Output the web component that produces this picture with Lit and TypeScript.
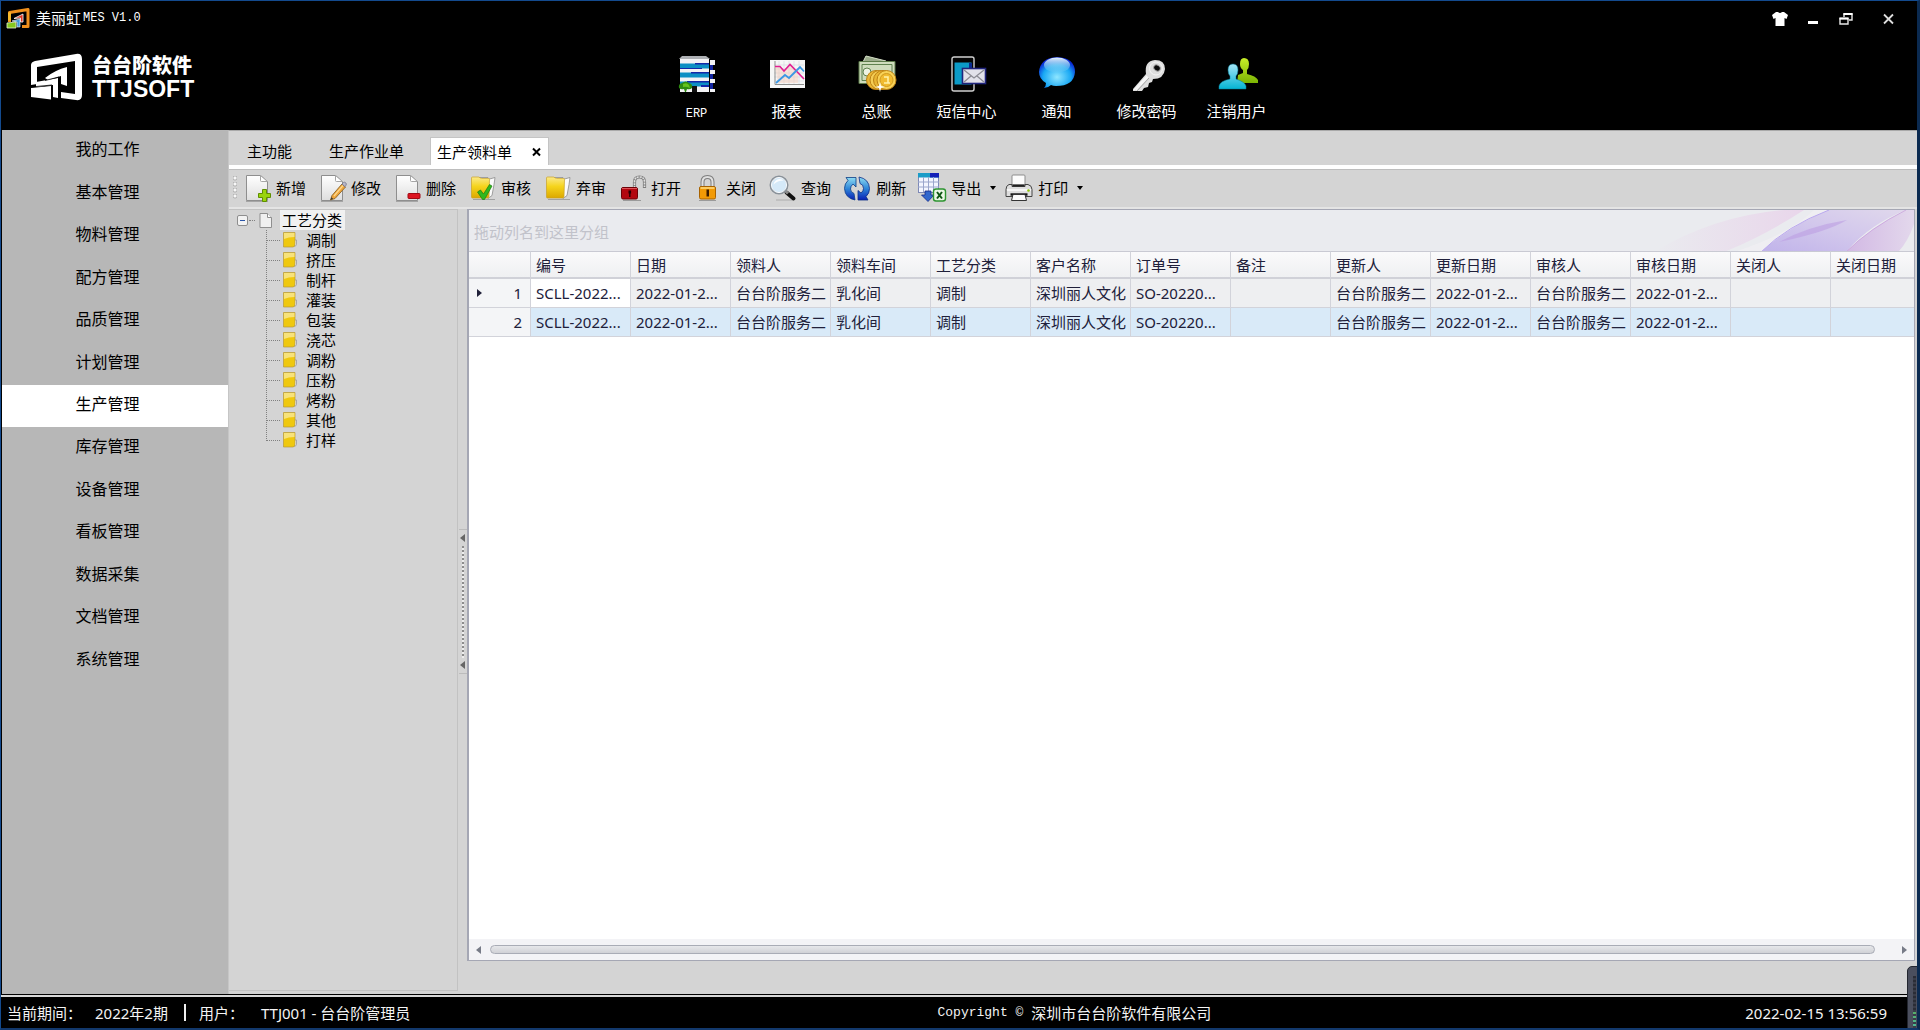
import { LitElement, html, css, svg, TemplateResult } from "lit";
import { customElement, state } from "lit/decorators.js";
import { classMap } from "lit/directives/class-map.js";

type Icon = TemplateResult;

/* ---- shared drawing pieces ---- */
const page = (id: string) => svg`
  <defs><linearGradient id=${id} x1="0" y1="0" x2="0" y2="1"><stop offset="0" stop-color="#fff"/><stop offset="1" stop-color="#dedede"/></linearGradient></defs>
  <path d="M.5 1.500h14l7 6v19h-21z" fill="url(#${id})" stroke="#8e8e8e"/>
  <path d="M14.500 1.500v5q0 1 1 1h6z" fill="#fff" stroke="#a5a5a5"/>
  <path d="M0 27.500h22" stroke="#777" opacity=".5"/>`;

const folder = (id: string) => svg`
  <defs><linearGradient id=${id} x1="0" y1="0" x2="0" y2="1"><stop offset="0" stop-color="#fbe98b"/><stop offset=".45" stop-color="#f5d41c"/><stop offset="1" stop-color="#dca800"/></linearGradient></defs>
  <path d="M7 3.500h10l1.500 1.500 5.500-1.500-1 7-2 11-4 3z" fill="#fafafa" stroke="#8c8c8c" stroke-width=".8"/>
  <path d="M.5 4q0-1 1-1h6l3 1.500h7q1 0 1 1l-.5 17q0 1.500-1.500 1.500h-15q-1 0-1-1z" fill="url(#${id})" stroke="#c9a227" stroke-width=".7"/>
  <path d="M2 25.500h22" stroke="#666" opacity=".45"/>`;

const tool = (body: unknown): Icon =>
  html`<svg class="tool-icon" viewBox="0 0 28 28" aria-hidden="true">${body}</svg>`;

const toolIcons: Record<string, Icon> = {
  add: tool(svg`${page("pa")}<path d="M16.500 15.500h4v4h4v4h-4v4h-4v-4h-4v-4h4z" fill="#9ad40c" stroke="#5f8f00"/>`),
  edit: tool(svg`${page("pe")}
    <path d="M9.500 26l1.500-4.500 10-11.500 3.500 3-10.500 11.500z" fill="#f0a63c" stroke="#8a6325" stroke-width=".9"/>
    <path d="M13 22l9-10.500" stroke="#ffd98c" stroke-width="1.200"/>
    <path d="M21 10l1.500-1.500q1-.8 2.200.3t.3 2.400l-1 1.500z" fill="#b8b8c8" stroke="#74748a" stroke-width=".8"/>
    <path d="M9.500 26l1-2.800 1.600 1.400z" fill="#333"/>`),
  remove: tool(svg`${page("pr")}<rect x="12" y="19.500" width="12" height="5" rx=".8" fill="#dc1420" stroke="#a00812"/>`),
  approve: tool(svg`${folder("fa")}<path d="M6.500 18l3-2 3 4 6-9.500 2.500 1.500-7.500 13.500h-2z" fill="#31b81d" stroke="#1c7d10" stroke-width=".7"/>`),
  revoke: tool(folder("fr")),
  unlock: tool(svg`
    <path d="M13.500 14V8q0-5 5-5t5 5v6" fill="none" stroke="#7e7e7e" stroke-width="3.200"/>
    <path d="M13.500 14V8q0-5 5-5t5 5v5" fill="none" stroke="#e2e2e2" stroke-width="1.600" stroke-dasharray="2 .8"/>
    <rect x=".5" y="13.500" width="16" height="11.500" rx="1.500" fill="#b30710" stroke="#6d0208"/>
    <path d="M1 14.500h15" stroke="#e05058" /><path d="M7.500 16.500h2.600v3h-.6v3.500h-1.400v-3.500h-.6z" fill="#260002"/>
    <path d="M2 26.500h18" stroke="#555" opacity=".45"/>`),
  lock: tool(svg`<g transform="translate(-2 0)">
    <path d="M8.500 14V8q0-5 5-5t5 5v6" fill="none" stroke="#7e7e7e" stroke-width="4"/>
    <path d="M8.500 14V8q0-5 5-5t5 5v6" fill="none" stroke="#e0e0e0" stroke-width="2"/>
    <rect x="5.500" y="12.500" width="16" height="12.500" rx="1.500" fill="#f29a06" stroke="#a86200"/>
    <path d="M6.500 14h14" stroke="#ffd978" stroke-width="1.600"/><path d="M12.500 15.500h2.500v7h-2.500z" fill="#3a1b00"/>
    <path d="M5 26.500h17" stroke="#555" opacity=".45"/></g>`),
  search: tool(svg`<g transform="translate(-3 0)">
    <path d="M18.500 18.500l7 6" stroke="#111" stroke-width="4" stroke-linecap="round"/>
    <path d="M17 16.500l3 3" stroke="#8b8b8b" stroke-width="3"/>
    <circle cx="11" cy="11" r="8.500" fill="#d5e9f8" stroke="#8a929a" stroke-width="2"/>
    <circle cx="11" cy="11" r="7.600" fill="none" stroke="#f4f7fa"/>
    <path d="M5.500 10.500q1-5 6-5.500 3 0 4 1.500-6 0-10 4z" fill="#fff" opacity=".9"/>
    <path d="M8 26h16" stroke="#555" opacity=".3"/></g>`),
  refresh: tool(svg`<g transform="translate(-3 0)">
    <defs><linearGradient id="rf" x1="0" y1="0" x2="0" y2="1"><stop offset="0" stop-color="#8fdcf2"/><stop offset=".5" stop-color="#2f86d8"/><stop offset="1" stop-color="#0a1fb4"/></linearGradient></defs>
    <path d="M12 26q-10-2-10.500-11.500 0-5 3.500-8l-2-3h10v9.500l-3-3q-2.500 2-2.500 5 0 3 3.500 4.500z" fill="url(#rf)" stroke="#0b3c86" stroke-width=".8"/>
    <path d="M16 3q10 2 10.500 11.500 0 5-3.500 8l2 3.500h-10v-9.500l3 2.500q2.500-2 2.500-4.500 0-4-3.500-5z" fill="url(#rf)" stroke="#0b2c86" stroke-width=".8"/></g>`),
  export: tool(svg`<g transform="translate(-3 0)">
    <rect x=".5" y="-.5" width="20" height="19" fill="#f3f6ff" stroke="#7d88b5"/>
    <path d="M0 -1h21v4.500h-21z" fill="#1a9cc8"/><path d="M12 -1h9v4.500h-9z" fill="#1420b8"/>
    <path d="M0 8h21M0 13h21M5.500 3v15M10.500 3v15M15.500 3v15" stroke="#9aa6cc" />
    <path d="M7 17h6v4h3l-6 6.500-6.500-6.500h3.500z" fill="#3167cd" stroke="#142a86" stroke-width=".8"/>
    <rect x="15.500" y="15" width="12" height="12" rx="2.500" fill="#e9f6e4" stroke="#2d9430" stroke-width="1.400"/>
    <path d="M19 18l5 6.500M24 18l-5 6.500" stroke="#0e5514" stroke-width="2"/></g>`),
  print: tool(svg`<g transform="translate(-3 0)">
    <path d="M7 11V2q0-1 1-1h11q1 0 1 1v9z" fill="#fcfcfc" stroke="#8d8d8d"/>
    <path d="M4 10.500h3v2h13v-2h3q4 1 4 5v7h-26v-7q0-4 3-5z" fill="#dedede" stroke="#444"/>
    <path d="M7.500 11.500h12" stroke="#222" stroke-width="2"/><path d="M2 16h24" stroke="#fff" stroke-width="1.400"/>
    <path d="M5.500 20.500h17" stroke="#111" stroke-width="2.400"/>
    <path d="M8 20.500h12l1.500 6h-15z" fill="#fafafa" stroke="#333"/><circle cx="23.500" cy="16.500" r="1.300" fill="#8fc40a"/></g>`),
};

const nav = (body: unknown): Icon =>
  html`<svg class="nav-icon" viewBox="0 0 36 36" aria-hidden="true">${body}</svg>`;

const navItems: { label: string; icon: Icon }[] = [
  {
    label: "ERP",
    icon: nav(svg`
      <path d="M3 0h24l4 3h-31z" fill="#aeb0b4"/>
      <path d="M1 3h29v33h-29z" fill="#f3f3f5"/>
      <path d="M1 7.500h29v5h-29zM1 16.500h29v5h-29zM1 25.500h29v5h-29z" fill="#0c8fc4"/>
      <path d="M16 7h14v1.500h-14zM1 12h22v1h-22zM12 16h18v1.500h-18zM8 25h22v1.500h-22zM22 29h8v2h-8z" fill="#1428a8"/>
      <path d="M31 4h5v32h-5z" fill="#f2f2f5"/>
      <path d="M31 9h3v5h-3zM31 18h3v5h-3zM31 27h3v6h-3z" fill="#1224a0"/><path d="M34 9h2v5h-2zM34 18h2v5h-2zM34 27h2v6h-2z" fill="#000"/>
      <path d="M13 30h5v6h-5z" fill="#111"/>
      <path d="M0 32q-1-4 3-5 4-3 7 0 4 1 3 5-2 2-5 1l-1 3h-1l-1-3q-3 1-5-1z" fill="#2e8c10"/><path d="M4 28q4-2 6 1l1 3q-4-2-7-1z" fill="#63c41d"/>`),
  },
  {
    label: "报表",
    icon: nav(svg`
      <rect x="1" y="4" width="35" height="28" fill="#f6f6f6"/>
      <path d="M5 9h30M5 13h30M5 17h30M5 21h30M5 25h30M10 5v24M15 5v24M20 5v24M25 5v24M30 5v24" stroke="#d7dbe0" stroke-width=".7"/>
      <path d="M6 5v23.500h29" fill="none" stroke="#8d8d8d"/>
      <path d="M6 11h6l3 4 6-6 8 9v9h-20z" fill="#f6c9b5" opacity=".45"/>
      <path d="M6 10.500h5l4 4.500 6-6.500 14 14.500" fill="none" stroke="#e11f93" stroke-width="1.600"/>
      <path d="M7 27l9-8 4 3 11-11 4 4.500" fill="none" stroke="#3a97e4" stroke-width="1.800"/>`),
  },
  {
    label: "总账",
    icon: nav(svg`
      <path d="M7 0l20 5v5l-24-2z" fill="#9cac8c" stroke="#d6e0c8"/>
      <path d="M0 5.500h36v22h-36z" fill="#cfdcbd" stroke="#5d7a4a"/>
      <path d="M3 8.500h30v16h-30z" fill="none" stroke="#5f8250"/><circle cx="8" cy="16" r="4" fill="#eef3e2" stroke="#5f8250"/>
      <circle cx="17" cy="24" r="9.500" fill="#e9b634" stroke="#bd8114"/><circle cx="20.500" cy="24" r="9.500" fill="#f5cd55" stroke="#bd8114"/>
      <circle cx="24" cy="24" r="9.500" fill="#e9b634" stroke="#bd8114"/><circle cx="27.500" cy="24" r="9.500" fill="#f8d257" stroke="#bd8114"/>
      <circle cx="27.500" cy="24" r="6.500" fill="#f1bb30" stroke="#d09a20"/><path d="M25 21h4v6M25 27h6" stroke="#fff2a6" stroke-width="1.600" fill="none"/>
      <path d="M21 26l1 4 4 1-4 1-1 4-1-4-4-1 4-1z" fill="#fff"/>`),
  },
  {
    label: "短信中心",
    icon: nav(svg`
      <rect x="3" y="1" width="22" height="34" rx="2" fill="#050505" stroke="#d0d0d0" stroke-width="1.400"/>
      <path d="M5.500 6.500h17v22h-17z" fill="#0b9bc8"/><path d="M20 7h3v9h-3z" fill="#0a2a90"/>
      <rect x="13.500" y="12.500" width="23" height="15" fill="#e2e2ea" stroke="#20247c" stroke-width="1.600"/>
      <path d="M15 14l10 8 10-8M15 26l7-6M35 26l-7-6" fill="none" stroke="#8c8c94" stroke-width="1.300"/>`),
  },
  {
    label: "通知",
    icon: nav(svg`
      <defs><radialGradient id="nb" cx=".5" cy=".65" r=".6"><stop offset="0" stop-color="#8fe6ff"/><stop offset=".65" stop-color="#18a8f4"/><stop offset="1" stop-color="#0a28d4"/></radialGradient>
      <linearGradient id="ns" x1="0" y1="0" x2="0" y2="1"><stop offset="0" stop-color="#e8f4fb"/><stop offset="1" stop-color="#6fc8f0" stop-opacity=".2"/></linearGradient></defs>
      <path d="M18 1q18 1 18 15-1 14-19 14-3 0-5-1-3 3-7 3 2-2 2-5-7-4-7-11 1-14 18-15z" fill="url(#nb)"/>
      <ellipse cx="18" cy="9" rx="13" ry="7.500" fill="url(#ns)"/>`),
  },
  {
    label: "修改密码",
    icon: nav(svg`<g transform="translate(2 1)">
      <path d="M15 17q-2-13 9-14 10 0 10 9-1 10-12 10l-1 3-3 1-1 4-4 1-2 3h-9v-2z" fill="#dedede"/>
      <path d="M16 19l-13 14M17 20l-12 13" stroke="#f8f8f8" stroke-width="1.200"/>
      <path d="M18 21l-12 13" stroke="#a6a6a6"/>
      <circle cx="25" cy="11.500" r="6.500" fill="none" stroke="#f5f5f5"/><ellipse cx="26" cy="11" rx="3.500" ry="2.800" transform="rotate(35 26 11)" fill="#0a0a0a" stroke="#a6a6a6"/></g>`),
  },
  {
    label: "注销用户",
    icon: nav(svg`
      <defs><linearGradient id="ug" x1="0" y1="0" x2="0" y2="1"><stop offset="0" stop-color="#c8ee28"/><stop offset="1" stop-color="#7cb404"/></linearGradient>
      <linearGradient id="ub" x1="0" y1="0" x2="0" y2="1"><stop offset="0" stop-color="#a6e6f8"/><stop offset="1" stop-color="#04b4d4"/></linearGradient></defs>
      <path d="M25 2q5 0 5 6 0 4-2 6v4q9 2 11 6v3h-21l1-8 5-2v-3q-3-2-3-6 0-6 4-6z" fill="url(#ug)"/>
      <path d="M14 8q5 0 5 6 0 4-2 6v3q9 3 10 7v3h-27v-3q1-5 11-7v-3q-2-2-2-6 0-6 5-6z" fill="url(#ub)" stroke="#057c98" stroke-width=".5"/>`),
  },
];

const sideItems = [
  "我的工作", "基本管理", "物料管理", "配方管理", "品质管理", "计划管理", "生产管理",
  "库存管理", "设备管理", "看板管理", "数据采集", "文档管理", "系统管理",
];

const tools: { label: string; icon: string; menu?: boolean }[] = [
  { label: "新增", icon: "add" },
  { label: "修改", icon: "edit" },
  { label: "删除", icon: "remove" },
  { label: "审核", icon: "approve" },
  { label: "弃审", icon: "revoke" },
  { label: "打开", icon: "unlock" },
  { label: "关闭", icon: "lock" },
  { label: "查询", icon: "search" },
  { label: "刷新", icon: "refresh" },
  { label: "导出", icon: "export", menu: true },
  { label: "打印", icon: "print", menu: true },
];

const treeItems = ["调制", "挤压", "制杆", "灌装", "包装", "浇芯", "调粉", "压粉", "烤粉", "其他", "打样"];

const columns = [
  "编号", "日期", "领料人", "领料车间", "工艺分类", "客户名称", "订单号", "备注",
  "更新人", "更新日期", "审核人", "审核日期", "关闭人", "关闭日期",
];

const record = [
  "SCLL-2022...", "2022-01-2...", "台台阶服务二", "乳化间", "调制", "深圳丽人文化", "SO-20220...", "",
  "台台阶服务二", "2022-01-2...", "台台阶服务二", "2022-01-2...", "", "",
];
const rows = [record, record];

@customElement("app-root")
export class AppRoot extends LitElement {
  @state() private section = "生产管理";

  static styles = css`
    :host {
      display: flex;
      flex-direction: column;
      box-sizing: border-box;
      height: 100vh;
      overflow: hidden;
      position: relative;
      border: 1px solid #134a8e;
      border-right: 3px solid #0b2a50;
      border-bottom: 2px solid #12386c;
      background: #000;
      color: #000;
      font-family: "Noto Sans", "Noto Sans CJK SC", sans-serif;
      font-size: 15px;
      line-height: 20px;
    }
    * { box-sizing: border-box; }
    button {
      margin: 0;
      padding: 0;
      border: 0;
      background: none;
      color: inherit;
      font: inherit;
      white-space: nowrap;
    }
    svg { display: block; flex: none; overflow: visible; }
    .mono { font-family: "Liberation Mono", monospace; font-size: 12px; }

    .titlebar {
      flex: none;
      display: flex;
      align-items: center;
      height: 35px;
      padding: 0 21px 0 6px;
      color: #fff;
    }
    .app-icon { width: 24px; height: 21px; }
    .app-name {
      flex: 1;
      display: flex;
      align-items: center;
      gap: 2px;
      margin: 0;
      padding: 0 0 2px 5px;
      font-size: 15px;
      font-weight: 400;
    }
    .controls { display: flex; align-items: center; gap: 17px; }
    .controls button { display: grid; place-items: center; width: 16px; height: 16px; }
    .controls button:last-child { margin-left: 9px; }

    .banner {
      flex: none;
      display: grid;
      grid-template-columns: 1fr auto 1fr;
      height: 94px;
      padding-left: 15px;
      color: #fff;
    }
    .brand { display: flex; gap: 10px; padding: 18px 0 0 15px; }
    .brand-mark { width: 51px; height: 47px; }
    .brand-text {
      display: flex;
      flex-direction: column;
      padding-top: 1px;
      font-family: "Liberation Sans", "Noto Sans CJK SC", sans-serif;
      font-weight: 900;
    }
    .brand-cn { font-size: 20px; line-height: 23px; }
    .brand-en { font-size: 23px; line-height: 22px; }
    .nav { display: flex; padding-top: 20px; }
    .nav-item {
      display: flex;
      flex-direction: column;
      align-items: center;
      gap: 9px;
      width: 90px;
      height: 66px;
    }
    .nav-item .mono { padding-top: 3px; }
    .nav-icon { width: 36px; height: 36px; }

    .body { flex: 1; display: flex; min-height: 0; padding-left: 1px; }
    .side {
      flex: none;
      width: 226px;
      background: #b7b7b7;
    }
    .side-list {
      display: grid;
      grid-auto-rows: 1fr;
      height: 552px;
      margin: 0;
      padding: 0;
      list-style: none;
    }
    .side-item { width: 100%; height: 100%; padding: 0 15px 4px 0; font-size: 16px; }
    .side-item.active { background: #fff; }

    .main {
      flex: 1;
      min-width: 0;
      display: flex;
      flex-direction: column;
      background: #d4d4d4;
      border-top: 1px solid #a9a9a9;
      border-left: 1px solid #c6c6c6;
    }
    .tabs { flex: none; display: flex; gap: 1px; height: 34px; padding-top: 6px; }
    .tab { height: 28px; padding: 0 18px; }
    .tab.active {
      display: flex;
      align-items: center;
      margin-left: 7px;
      gap: 18px;
      padding: 0 6px;
      background: #fff;
      border: 1px solid #c4c4c4;
      border-bottom: 0;
    }
    .close { display: grid; place-items: center; width: 12px; height: 12px; }
    .strip { flex: none; height: 5px; background: #fff; border-bottom: 1px solid #bdbdbd; }

    .toolbar {
      flex: none;
      display: flex;
      align-items: center;
      height: 39px;
      padding: 0 0 1px 4px;
      border-bottom: 2px solid #e4e4e4;
    }
    .grip {
      width: 4px;
      height: 24px;
      margin-right: 9px;
      background: radial-gradient(circle at 2px 2px, #f8f8f8 1px, #b2b2b2 2px, #d4d4d4 3px) 0 0 / 4px 6px;
    }
    .tool { display: flex; align-items: center; gap: 2px; padding-right: 15px; }
    .tool.menu { padding-right: 12px; }
    .tool-icon { width: 28px; height: 28px; }
    .caret {
      width: 0;
      height: 0;
      margin-left: 7px;
      border: 3px solid transparent;
      border-top: 4px solid #000;
      border-bottom: 0;
    }

    .work { flex: 1; display: flex; min-height: 0; padding-right: 2px; }
    .tree {
      flex: none;
      width: 229px;
      margin-bottom: 3px;
      padding-left: 8px;
      border: solid #c2c2c2;
      border-width: 1px 1px 1px 0;
    }
    .tree-root { display: flex; align-items: center; height: 20px; }
    .expander {
      display: grid;
      place-items: center;
      width: 11px;
      height: 11px;
      background: #f2f2f2;
      border: 1px solid #8e8e8e;
      border-radius: 2px;
    }
    .expander i { width: 5px; height: 1px; background: #2a55a8; }
    .stub { width: 6px; margin: 0 4px 0 1px; border-top: 1px dotted #808080; }
    .page-icon { width: 13px; height: 15px; }
    .root-name { margin-left: 8px; padding: 0 3px 0 2px; background: #f1f1f1; }
    .tree-list { margin: 0 0 0 29px; padding: 0; list-style: none; }
    .tree-list li {
      display: flex;
      align-items: center;
      height: 20px;
      background: repeating-linear-gradient(#808080 0 1px, transparent 1px 2px) 0 0 / 1px 100% no-repeat;
    }
    .tree-list li:last-child { background-size: 1px 10px; }
    .twig { width: 14px; margin-right: 3px; border-top: 1px dotted #808080; }
    .leaf-icon { width: 14px; height: 16px; margin-right: 9px; }

    .splitter { flex: none; display: flex; flex-direction: column; justify-content: center; align-items: center; width: 9px; }
    .split-grip {
      display: flex;
      flex-direction: column;
      justify-content: space-between;
      align-items: center;
      width: 8px;
      height: 145px;
      padding: 4px 0;
      border: solid #bcbcbc;
      border-width: 1px 0;
    }
    .dots { width: 2px; height: 112px; background: linear-gradient(#8c8c8c 0 2px, #ededed 2px 4px) 0 0 / 2px 4px; }

    .grid {
      flex: 1;
      min-width: 0;
      display: flex;
      flex-direction: column;
      margin-bottom: 33px;
      background: #fff;
      border: 1px solid #a5a7b4;
      border-left-width: 2px;
      color: #20203a;
    }
    .group {
      flex: none;
      display: flex;
      justify-content: space-between;
      align-items: center;
      height: 41px;
      padding-left: 5px;
      overflow: hidden;
      background: #eaebef;
      color: #c1c2ca;
    }
    .group span { padding-top: 3px; }
    .swirl { width: 300px; height: 42px; overflow: hidden; }
    .scroller { flex: 1; min-height: 0; overflow: hidden; }
    table { table-layout: fixed; width: 1462px; border-collapse: separate; border-spacing: 0; }
    col.mark { width: 62px; }
    col.data { width: 100px; }
    th, td {
      padding: 0 0 0 5px;
      border: solid #d2d3da;
      border-width: 0 1px 1px 0;
      text-align: left;
      font-weight: 400;
      white-space: nowrap;
      overflow: hidden;
    }
    th {
      height: 28px;
      border-top: 1px solid #c9cad3;
      border-bottom: 2px solid #d0d1d8;
      background: linear-gradient(#fafafb, #eff0f2);
    }
    td { height: 29px; background: #eeeff1; }
    tr.alt td { background: #d9eaf8; }
    td.focus { background: #fff; }
    td.mark, tr.alt td.mark { background: #f4f5f7; }
    .mark-box { display: flex; justify-content: space-between; align-items: center; padding: 0 8px 0 3px; }
    .arrow { width: 0; height: 0; border: 4px solid transparent; border-left: 5px solid #20203a; border-right: 0; }
    .hscroll { flex: none; display: flex; align-items: center; height: 21px; padding: 0 7px; background: #f3f3f6; }
    .left, .right { width: 0; height: 0; border: 4px solid transparent; }
    .left { border-right: 5px solid #777b87; border-left: 0; }
    .right { border-left: 5px solid #777b87; border-right: 0; }
    .thumb {
      flex: 1;
      height: 9px;
      margin: 0 27px 0 9px;
      border: 1px solid #a9acb6;
      border-radius: 5px;
      background: linear-gradient(#e6e7ea, #d0d1d6);
    }

    .status {
      flex: none;
      display: grid;
      grid-template-columns: 49fr 50fr;
      align-items: center;
      height: 34px;
      padding: 2px 30px 0 6px;
      border-top: 1px solid #000;
      box-shadow: inset 0 2px #d8d8d8;
      color: #f4f4f4;
    }
    .facts { display: flex; align-items: center; }
    .facts .period { width: 88px; }
    .facts .value { padding-right: 16px; }
    .bar { width: 2px; height: 17px; background: #f0f0f0; margin-right: 13px; }
    .facts .user { width: 62px; }
    .legal { display: flex; justify-content: space-between; align-items: center; }
    .copy { display: flex; align-items: center; gap: 8px; }
    .copy .mono { font-size: 13px; }
    .meter {
      position: absolute;
      right: -3px;
      bottom: -2px;
      width: 13px;
      height: 64px;
      padding: 9px 3px 0 5px;
      border: 1px solid #23262f;
      border-radius: 5px 0 0 0;
      background: #4b4f5e;
    }
    .meter i {
      display: block;
      height: 100%;
      background:
        repeating-linear-gradient(transparent 0 2px, #3a3d49 2px 4px),
        linear-gradient(#2b2d36 0 36px, #58ac68 36px, #4cbfa0);
    }
  `;

  private titlebar() {
    return html`
      <header class="titlebar">
        <svg class="app-icon" viewBox="0 0 24 21" aria-hidden="true">
          <path d="M2.500 14v-9.500L21 1.500v17h-6" fill="none" stroke="#f0901c" stroke-width="3" stroke-linejoin="round"/>
          <path d="M2.500 4.500v8" stroke="#f6b82c" stroke-width="3"/>
          <path d="M7 10.500l9-4.500v8h-2.500v-4z" fill="#dc3422" stroke="#fff" stroke-width=".8"/>
          <path d="M5 13l8-2v8h-3v-5z" fill="#3f97d8" stroke="#fff" stroke-width=".6"/>
          <path d="M0 15l9-1v6h-9z" fill="#86c81e" stroke="#e6f4d0" stroke-width=".8"/>
        </svg>
        <h1 class="app-name"><span>美丽虹</span><span class="mono">MES V1.0</span></h1>
        <div class="controls">
          <button aria-label="皮肤"><svg width="16" height="14" viewBox="0 0 16 14"><path d="M4 0h2q2 2 4 0h2l4 3-1.500 4-2-1v8h-9v-8l-2 1L0 3z" fill="#fff"/></svg></button>
          <button aria-label="最小化"><svg width="10" height="12" viewBox="0 0 10 12"><path d="M0 8h10v3H0z" fill="#fff"/></svg></button>
          <button aria-label="还原"><svg width="14" height="12" viewBox="0 0 14 12"><path d="M5 4V1h8v6h-3M1 5.500h8v5.500H1z" fill="none" stroke="#e8e8e8" stroke-width="1.400"/><path d="M4.500 1h9M.5 5.500h9" stroke="#fff" stroke-width="2"/></svg></button>
          <button aria-label="关闭窗口"><svg width="11" height="10" viewBox="0 0 11 10"><path d="M1 .5l9 9M10 .5l-9 9" stroke="#ddd" stroke-width="1.800"/></svg></button>
        </div>
      </header>`;
  }

  private banner() {
    return html`
      <div class="banner">
        <div class="brand">
          <svg class="brand-mark" viewBox="0 0 51 47" aria-hidden="true">
            <path d="M0 31V11q0-3 4-4L45 0q6-1 6 5v36q0 6-6 5l-15-2v-6l14 2V7L6 13v17z" fill="#fff"/>
            <path d="M14 24q10-8 22-11v19l-6-2v-8l-13 4z" fill="#fff"/>
            <path d="M5 28l22-4v20l-5-1v-12l-17 2z" fill="#fff"/>
            <path d="M0 34l20-2v13.500L0 43z" fill="#fff"/>
            <path d="M0 33l21-2v14M14 26.500l14-3.500v10" fill="none" stroke="#000" stroke-width=".8"/>
          </svg>
          <div class="brand-text"><span class="brand-cn">台台阶软件</span><span class="brand-en">TTJSOFT</span></div>
        </div>
        <nav class="nav">
          ${navItems.map((n) => html`<button class="nav-item">${n.icon}<span class=${classMap({ mono: n.label === "ERP" })}>${n.label}</span></button>`)}
        </nav>
      </div>`;
  }

  private tree() {
    return html`
      <div class="tree">
        <div class="tree-root">
          <button class="expander" aria-label="折叠"><i></i></button><span class="stub"></span>
          <svg class="page-icon" viewBox="0 0 13 15" aria-hidden="true"><path d="M1 .5h7.500l4 4v10H1z" fill="#f0f0f0" stroke="#8f8f8f"/><path d="M8.500 .5v4h4" fill="#fff" stroke="#8f8f8f"/></svg>
          <span class="root-name">工艺分类</span>
        </div>
        <ul class="tree-list">
          ${treeItems.map((t) => html`<li><span class="twig"></span>
            <svg class="leaf-icon" viewBox="0 0 14 16" aria-hidden="true">
              <path d="M11 8h2.500v4q0 2.500-3 2.500z" fill="#eee" stroke="#999" stroke-width=".8"/>
              <path d="M.5 .5h11.500v11q0 3.500-2 3.500H.5z" fill="#efc80e" stroke="#b79a3a" stroke-width=".7"/><path d="M1 1h10.500v4q-6 0-10.500 2z" fill="#f7e27a"/>
            </svg><span>${t}</span></li>`)}
        </ul>
      </div>`;
  }

  private grid() {
    return html`
      <section class="grid">
        <div class="group">
          <span>拖动列名到这里分组</span>
          <svg class="swirl" viewBox="0 0 300 42" aria-hidden="true">
            <defs>
              <linearGradient id="s1" x1="0" y1="0" x2="1" y2="0"><stop offset="0" stop-color="#eaebef"/><stop offset="1" stop-color="#e8c8e8"/></linearGradient>
              <linearGradient id="s2" x1="0" y1="1" x2="1" y2="0"><stop offset="0" stop-color="#c0b3ea"/><stop offset=".5" stop-color="#d2c7ec"/><stop offset="1" stop-color="#e0d8ec"/></linearGradient>
              <linearGradient id="s3" x1="0" y1="0" x2="1" y2="0"><stop offset="0" stop-color="#d2b8e4"/><stop offset="1" stop-color="#e3d8ec"/></linearGradient>
            </defs>
            <path d="M40 42q60-36 130-42h20q-40 26-80 42z" fill="url(#s1)" opacity=".6"/>
            <path d="M120 42q56-18 80-42h14q-30 20-66 42z" fill="#f0eff3" opacity=".8"/>
            <path d="M147 42Q175 16 215 0h77q-36 14-60 42z" fill="url(#s2)"/>
            <path d="M147 42q26-26 68-42" fill="none" stroke="#baa8ee"/>
            <path d="M165 32q30-16 68-22-20 12-68 22z" fill="#bd9ee2" opacity=".6"/>
            <path d="M232 42Q258 16 292 0h8v14q-6 18-16 28z" fill="url(#s3)"/>
            <path d="M232 42q24-24 60-42" fill="none" stroke="#c49ada" opacity=".7"/>
          </svg>
        </div>
        <div class="scroller">
          <table>
            <colgroup><col class="mark">${columns.map(() => html`<col class="data">`)}</colgroup>
            <thead><tr><th aria-label="行号"></th>${columns.map((c) => html`<th scope="col">${c}</th>`)}</tr></thead>
            <tbody>
              ${rows.map((r, i) => html`<tr class=${classMap({ alt: i === 1 })}>
                <td class="mark"><div class="mark-box"><span class=${classMap({ arrow: i === 0 })}></span><span>${i + 1}</span></div></td>
                ${r.map((v, j) => html`<td class=${classMap({ focus: i === 0 && j === 0 })}>${v}</td>`)}
              </tr>`)}
            </tbody>
          </table>
        </div>
        <div class="hscroll"><span class="left"></span><span class="thumb"></span><span class="right"></span></div>
      </section>`;
  }

  render() {
    const arrow = html`<svg width="5" height="8" viewBox="0 0 5 8"><path d="M5 0v8L0 4z" fill="#666"/></svg>`;
    return html`
      ${this.titlebar()} ${this.banner()}
      <div class="body">
        <nav class="side">
          <ul class="side-list">
            ${sideItems.map((s) => html`<li><button class=${classMap({ "side-item": true, active: s === this.section })} @click=${() => (this.section = s)}>${s}</button></li>`)}
          </ul>
        </nav>
        <main class="main">
          <div class="tabs">
            <button class="tab">主功能</button>
            <button class="tab">生产作业单</button>
            <div class="tab active"><button>生产领料单</button>
              <button class="close" aria-label="关闭标签"><svg width="9" height="8" viewBox="0 0 9 8"><path d="M1 .5l7 7M8 .5l-7 7" stroke="#000" stroke-width="2"/></svg></button>
            </div>
          </div>
          <div class="strip"></div>
          <div class="toolbar">
            <span class="grip"></span>
            ${tools.map((t) => html`<button class=${classMap({ tool: true, menu: !!t.menu })}>${toolIcons[t.icon]}<span>${t.label}</span>${t.menu ? html`<span class="caret"></span>` : ""}</button>`)}
          </div>
          <div class="work">
            ${this.tree()}
            <div class="splitter"><div class="split-grip">${arrow}<span class="dots"></span>${arrow}</div></div>
            ${this.grid()}
          </div>
        </main>
      </div>
      <footer class="status">
        <div class="facts"><span class="period">当前期间：</span><span class="value">2022年2期</span><span class="bar"></span><span class="user">用户：</span><span>TTJ001 - 台台阶管理员</span></div>
        <div class="legal">
          <div class="copy"><span class="mono">Copyright ©</span><span>深圳市台台阶软件有限公司</span></div>
          <time>2022-02-15 13:56:59</time>
        </div>
      </footer>
      <div class="meter"><i></i></div>`;
  }
}
